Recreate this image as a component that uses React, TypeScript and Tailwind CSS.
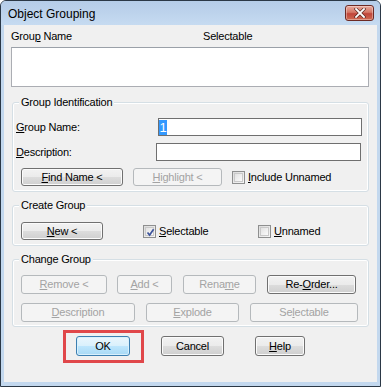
import React from "react";

const FONT = "font-['Liberation_Sans',Arial,sans-serif]";

function Btn({
  w,
  h = 18,
  disabled = false,
  primary = false,
  children,
}: {
  w: number;
  h?: number;
  disabled?: boolean;
  primary?: boolean;
  children: React.ReactNode;
}) {
  let cls =
    "flex items-center justify-center rounded-[3px] border text-[11px] tracking-[-0.2px] leading-none shrink-0 ";
  if (disabled) {
    cls += "border-[#b5b9bc] bg-[#f4f4f4] text-[#a3a3a3]";
  } else if (primary) {
    cls +=
      "border-[#3c7fb1] text-black bg-[linear-gradient(to_bottom,#eaf6fd_0%,#d9f0fc_50%,#bee6fd_50%,#a7d9f5_100%)] shadow-[inset_0_0_0_1px_#d8f0fd]";
  } else {
    cls +=
      "border-[#707070] text-black bg-[linear-gradient(to_bottom,#f2f2f2_0%,#ebebeb_50%,#dddddd_50%,#cfcfcf_100%)] shadow-[inset_0_0_0_1px_#fbfbfb]";
  }
  return (
    <div className={cls} style={{ width: w, height: h }}>
      <span>{children}</span>
    </div>
  );
}

function Check({ checked = false, label }: { checked?: boolean; label: React.ReactNode }) {
  return (
    <div className="flex items-center">
      <div className="w-[13px] h-[13px] border border-[#8e8f8f] bg-[linear-gradient(135deg,#dcdcdc_0%,#f6f6f6_100%)] p-[1px] shrink-0">
        <div className="w-full h-full border border-[#c9c9c9] bg-[linear-gradient(135deg,#e2e2e2_0%,#fbfbfb_100%)] relative">
          {checked && (
            <svg viewBox="0 0 9 9" className="absolute left-0 top-0 w-[9px] h-[9px]">
              <path d="M1.5 4.5 L3.6 7 L7.6 1.2" fill="none" stroke="#3e559c" strokeWidth="1.7" />
            </svg>
          )}
        </div>
      </div>
      <span className="ml-[3px] text-[11px] tracking-[-0.2px] text-black leading-[14px]">{label}</span>
    </div>
  );
}

function GroupBox({
  title,
  className,
  children,
}: {
  title: string;
  className: string;
  children: React.ReactNode;
}) {
  return (
    <div
      className={
        "relative border border-[#d5dfe5] rounded-[3px] shadow-[inset_0_0_0_1px_#ffffff] " + className
      }
    >
      <span className="absolute left-[6px] top-[-8px] bg-[#f0f0f0] px-[2px] text-[11px] tracking-[-0.2px] leading-[14px] text-black">
        {title}
      </span>
      {children}
    </div>
  );
}

export default function App() {
  return (
    <div className={"w-[381px] h-[387px] " + FONT}>
      <div className="w-[381px] h-[387px] border border-[#2b3846] rounded-t-[6px] bg-[#c3d8ee] flex flex-col overflow-hidden">
        {/* Title bar */}
        <div className="h-[24px] flex items-center justify-between pl-[7px] pr-[6px] bg-[linear-gradient(to_bottom,#b5cde8_0%,#bdd3ec_50%,#c6dbf1_100%)] shrink-0">
          <span className="text-[12px] text-black leading-none mt-[1px]">Object Grouping</span>
          <div className="w-[29px] h-[16px] rounded-[3px] border border-[#6d2a24] bg-[linear-gradient(to_bottom,#e9a99c_0%,#d47766_45%,#c0453a_55%,#cf6a52_100%)] flex items-center justify-center shadow-[inset_0_0_0_1px_rgba(255,255,255,0.35)]">
            <svg viewBox="0 0 12 10" className="w-[12px] h-[10px]">
              <path d="M2 1 L10 9 M10 1 L2 9" stroke="#5a2a24" strokeWidth="3.2" strokeLinecap="square" />
              <path d="M2 1 L10 9 M10 1 L2 9" stroke="#ffffff" strokeWidth="1.8" strokeLinecap="square" />
            </svg>
          </div>
        </div>

        {/* Client area */}
        <div className="flex-1 mx-[3px] mb-[4px] bg-[#f0f0f0] flex flex-col pl-[7px] text-black">
          {/* List header */}
          <div className="mt-[4px] h-[14px] flex text-[11px] tracking-[-0.2px] leading-[14px]">
            <span className="w-[192px]">
              Grou<u>p</u> Name
            </span>
            <span>Selectable</span>
          </div>
          {/* List box */}
          <div className="mt-[4px] w-[358px] h-[40px] bg-white border border-[#abadb3] border-t-[#9aa0a8]" />

          {/* Group Identification */}
          <GroupBox title="Group Identification" className="mt-[15px] ml-[1px] w-[357px] h-[90px] pt-[15px] pl-[3px]">
            <div className="flex items-center h-[18px]">
              <span className="w-[142px] text-[11px] tracking-[-0.2px] leading-[14px]">
                <u>G</u>roup Name:
              </span>
              <div className="w-[204px] h-[18px] border border-[#6f6f6f] bg-white flex items-center">
                <span className="ml-[0px] h-[15px] w-[8px] bg-[#3399ff] text-white text-[13px] leading-[15px] flex justify-center">
                  1
                </span>
              </div>
            </div>
            <div className="flex items-center h-[18px] mt-[7px]">
              <span className="w-[140px] text-[11px] tracking-[-0.2px] leading-[14px]">
                <u>D</u>escription:
              </span>
              <div className="w-[205px] h-[18px] border border-[#6f6f6f] bg-white" />
            </div>
            <div className="flex items-center h-[18px] mt-[7px] pl-[5px]">
              <Btn w={102}>
                <u>F</u>ind Name &lt;
              </Btn>
              <div className="ml-[10px]">
                <Btn w={89} disabled>
                  <u>H</u>ighlight &lt;
                </Btn>
              </div>
              <div className="ml-[10px]">
                <Check
                  label={
                    <>
                      <u>I</u>nclude Unnamed
                    </>
                  }
                />
              </div>
            </div>
          </GroupBox>

          {/* Create Group */}
          <GroupBox title="Create Group" className="mt-[13px] ml-[1px] w-[357px] h-[41px] pt-[16px] pl-[8px]">
            <div className="flex items-center h-[18px]">
              <Btn w={82}>
                <u>N</u>ew &lt;
              </Btn>
              <div className="ml-[40px] w-[115px]">
                <Check
                  checked
                  label={
                    <>
                      <u>S</u>electable
                    </>
                  }
                />
              </div>
              <Check
                label={
                  <>
                    <u>U</u>nnamed
                  </>
                }
              />
            </div>
          </GroupBox>

          {/* Change Group */}
          <GroupBox title="Change Group" className="mt-[13px] ml-[1px] w-[357px] h-[68px] pt-[15px] pl-[8px]">
            <div className="flex items-center h-[19px]">
              <Btn w={86} h={19} disabled>
                <u>R</u>emove &lt;
              </Btn>
              <div className="ml-[10px]">
                <Btn w={55} h={19} disabled>
                  <u>A</u>dd &lt;
                </Btn>
              </div>
              <div className="ml-[11px]">
                <Btn w={73} h={19} disabled>
                  Rena<u>m</u>e
                </Btn>
              </div>
              <div className="ml-[11px]">
                <Btn w={89} h={19}>
                  Re-<u>O</u>rder...
                </Btn>
              </div>
            </div>
            <div className="flex items-center h-[19px] mt-[9px]">
              <Btn w={114} h={19} disabled>
                <u>D</u>escription
              </Btn>
              <div className="ml-[11px]">
                <Btn w={93} h={19} disabled>
                  <u>E</u>xplode
                </Btn>
              </div>
              <div className="ml-[11px]">
                <Btn w={108} h={19} disabled>
                  Se<u>l</u>ectable
                </Btn>
              </div>
            </div>
          </GroupBox>

          {/* Bottom buttons */}
          <div className="mt-[9px] ml-[65px] flex items-center h-[20px]">
            <div className="relative">
              <Btn w={54} h={20} primary>
                OK
              </Btn>
              <div className="absolute left-[-13px] top-[-6px] w-[81px] h-[33px] border-[3px] border-[#e0474a] pointer-events-none" />
            </div>
            <div className="ml-[31px]">
              <Btn w={63} h={20}>
                Cancel
              </Btn>
            </div>
            <div className="ml-[31px]">
              <Btn w={50} h={20}>
                <u>H</u>elp
              </Btn>
            </div>
          </div>
        </div>
      </div>
    </div>
  );
}
